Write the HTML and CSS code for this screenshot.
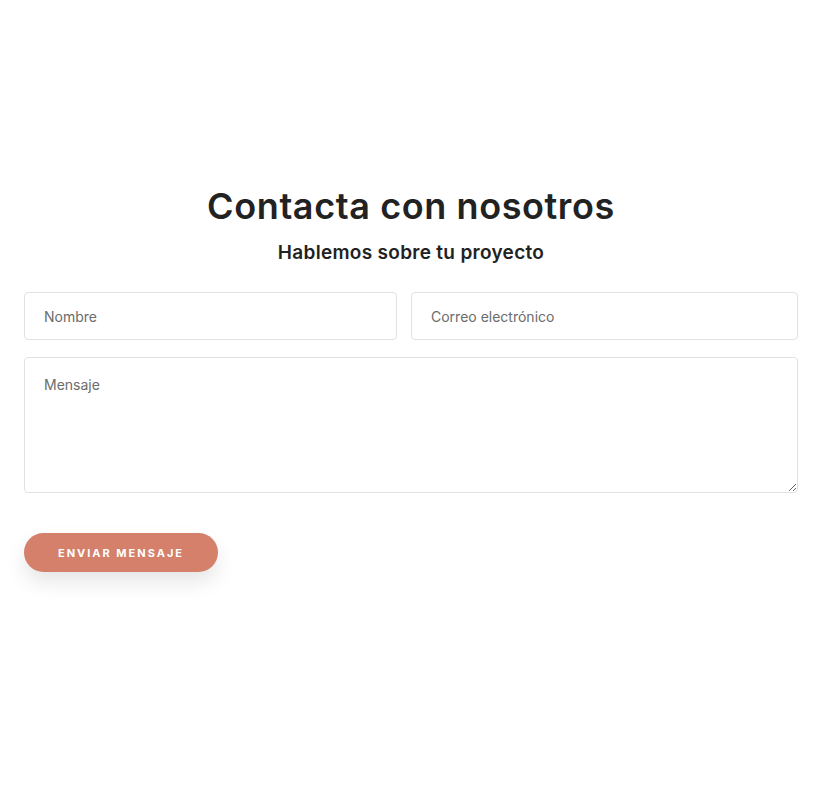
FILE: index.html
```html
<!DOCTYPE html>
<html lang="es">
<head>
    <meta charset="UTF-8">
    <meta name="viewport" content="width=device-width, initial-scale=1.0">
    <title>Contacto</title>
    <link rel="stylesheet" href="styles.css">
</head>
<body>
    <section class="contact">
        <h1>Contacta con nosotros</h1>
        <h2>Hablemos sobre tu proyecto</h2>
        <form class="contact-form" action="#" method="post">
            <div class="row">
                <input type="text" name="nombre" placeholder="Nombre">
                <input type="email" name="email" placeholder="Correo electrónico">
            </div>
            <textarea name="mensaje" placeholder="Mensaje"></textarea>
            <button type="submit">Enviar mensaje</button>
        </form>
    </section>
</body>
</html>
```

FILE: styles.css
```css
body {
    font-family: Inter, "Noto Sans", sans-serif;
    margin: 0;
    padding: 0;
    background-color: #fff;
    color: #222;
}
.contact {
    padding: 184px 28px 80px 24px;
}
h1 {
    text-align: center;
    font-size: 36px;
    font-weight: 600;
    letter-spacing: 0.6px;
    margin: 0 0 13px;
    color: #222;
}
h2 {
    text-align: center;
    font-size: 19px;
    font-weight: 600;
    letter-spacing: 0.3px;
    margin: 0 0 28px;
    color: #222;
}
.contact-form {
    display: flex;
    flex-direction: column;
    gap: 17px;
}
.row {
    display: grid;
    grid-template-columns: 373fr 387fr;
    gap: 14px;
}
input, textarea {
    font-family: inherit;
    font-size: 14px;
    color: #333;
    padding: 0 19px;
    border: 1px solid #e2e2e2;
    border-radius: 4px;
    box-sizing: border-box;
    outline: none;
}
input {
    height: 48px;
    min-width: 0;
}
textarea {
    height: 136px;
    padding-top: 18px;
}
::placeholder {
    color: #6b6b6b;
}
button {
    align-self: flex-start;
    margin-top: 23px;
    width: 194px;
    height: 39px;
    background-color: #d4806b;
    border: none;
    border-radius: 20px;
    color: #fff;
    font-family: inherit;
    font-size: 11px;
    font-weight: 700;
    letter-spacing: 2px;
    text-transform: uppercase;
    box-shadow: 0 10px 20px rgba(0,0,0,0.1);
    cursor: pointer;
}
```
